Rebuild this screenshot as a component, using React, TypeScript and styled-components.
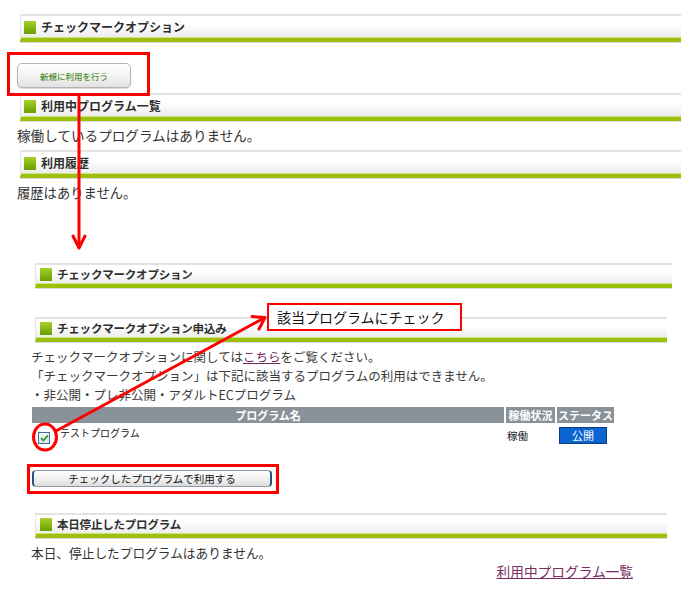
import React from "react";
import styled, { createGlobalStyle } from "styled-components";

const GlobalStyle = createGlobalStyle`
  html, body { margin: 0; padding: 0; background: #fff; }
  body { font-family: "Noto Sans CJK JP", "Noto Sans", sans-serif; color: #333; }
  * { box-sizing: border-box; }
`;

const Page = styled.div`
  position: relative;
  width: 692px;
  height: 591px;
  overflow: hidden;
  background: #fff;
`;

const TopShot = styled.section`
  display: flex;
  flex-direction: column;
  align-items: flex-start;
  padding: 14px 11px 0 17px;
`;

const BottomShot = styled.section`
  display: flex;
  flex-direction: column;
  align-items: flex-start;
  margin-top: 60px;
  padding-left: 31px;
`;

const Head = styled.div<{ $compact?: boolean; $width: number; $gap?: number }>`
  display: flex;
  align-items: center;
  gap: 5px;
  flex: none;
  margin-top: ${(p) => p.$gap ?? 0}px;
  margin-left: ${(p) => (p.$compact ? 4 : 3)}px;
  width: ${(p) => p.$width}px;
  height: ${(p) => (p.$compact ? 25 : 28)}px;
  padding-left: ${(p) => (p.$compact ? 4 : 3)}px;
  border-top: 2px solid #e3e3e3;
  border-left: 1px solid #e6e6e6;
  border-bottom: 4px solid #9bc10d;
  background: linear-gradient(#ffffff 0%, #ffffff 35%, #ececec 100%);
  box-shadow: 0 1px 0 #dcdcdc, inset 0 -1px 0 #cfe27a;
`;

const Mark = styled.span`
  flex: none;
  width: 12px;
  height: 13px;
  background: linear-gradient(#a8d12a, #6a9e00);
`;

const HeadTitle = styled.span<{ $compact?: boolean }>`
  font-size: ${(p) => (p.$compact ? 11.5 : 12)}px;
  font-weight: 700;
  color: #2e2e2e;
  line-height: 1;
  white-space: nowrap;
  letter-spacing: ${(p) => (p.$compact ? "-0.2px" : "0")};
`;

const Highlight = styled.div<{ $t: number; $r: number; $b: number; $l: number; $gap: number; $indent?: number }>`
  position: relative;
  margin-top: ${(p) => p.$gap}px;
  margin-left: ${(p) => p.$indent ?? 0}px;
  display: flex;
  &::after {
    content: "";
    position: absolute;
    top: -${(p) => p.$t}px;
    right: -${(p) => p.$r}px;
    bottom: -${(p) => p.$b}px;
    left: -${(p) => p.$l}px;
    border: 3px solid #ff0000;
    pointer-events: none;
  }
`;

const SoftButton = styled.button`
  width: 114px;
  height: 25px;
  padding: 0;
  border: 1px solid #b4b4b4;
  border-radius: 5px;
  background: linear-gradient(#ffffff, #f4f4f4 50%, #e2e2e2);
  box-shadow: 0 1px 1px rgba(0, 0, 0, 0.15);
  font-family: "Noto Sans CJK JP", sans-serif;
  font-size: 8.5px;
  color: #4d8b2c;
  font-weight: 500;
`;

const Note = styled.p<{ $gap: number; $size: number; $lh: number }>`
  margin: ${(p) => p.$gap}px 0 0;
  font-size: ${(p) => p.$size}px;
  line-height: ${(p) => p.$lh}px;
  color: #333;
  white-space: nowrap;
`;

const InfoLines = styled.div`
  margin-top: 5px;
  font-size: 12.5px;
  line-height: 19px;
  color: #3a3a3a;
  white-space: nowrap;
`;

const InlineLink = styled.a`
  color: #7a2c5e;
  text-decoration: underline;
`;

const Grid = styled.div`
  margin-top: 3px;
  margin-left: 1px;
  display: grid;
  grid-template-columns: 472px 49px 57px;
  column-gap: 2px;
`;

const HeadCell = styled.div`
  height: 16px;
  background: #8a9299;
  color: #fff;
  font-size: 11px;
  font-weight: 700;
  line-height: 16px;
  text-align: center;
  white-space: nowrap;
`;

const Cell = styled.div<{ $pad: number }>`
  height: 26px;
  display: flex;
  align-items: flex-start;
  padding-top: ${(p) => p.$pad}px;
`;

const NameCell = styled(Cell)`
  padding-left: 6px;
  gap: 10px;
`;

const Check = styled.span`
  flex: none;
  margin-top: 6px;
  width: 12px;
  height: 12px;
  border: 1px solid #3f6d97;
  background: linear-gradient(#f7f7f7, #e4e6e8);
  display: flex;
  align-items: center;
  justify-content: center;
`;

const SmallText = styled.span<{ $size: number }>`
  font-size: ${(p) => p.$size}px;
  line-height: 14px;
  color: #222;
  white-space: nowrap;
`;

const StateCell = styled(Cell)`
  padding-left: 1px;
`;

const Badge = styled.span`
  margin-left: 2px;
  width: 48px;
  height: 17px;
  background: #0b64cf;
  border: 1px solid #0a3f86;
  color: #fff;
  font-size: 11px;
  line-height: 15px;
  text-align: center;
`;

const WideButton = styled.button`
  width: 240px;
  height: 17px;
  padding: 0;
  border: 1px solid #8f9aa8;
  border-left: 2px solid #2a5580;
  border-right: 2px solid #2a5580;
  border-radius: 4px;
  background: linear-gradient(#ffffff, #f1f1f1 55%, #dcdcdc);
  font-family: "Noto Sans CJK JP", sans-serif;
  font-size: 10.5px;
  line-height: 13px;
  color: #111;
`;

const LinkRow = styled.div`
  align-self: stretch;
  display: flex;
  justify-content: flex-end;
  padding-right: 59px;
  font-size: 13.7px;
  line-height: 19px;
`;

const PlainLink = styled.a`
  color: #7a2c5e;
  text-decoration: underline;
`;

const Callout = styled.div`
  position: absolute;
  left: 267px;
  top: 303px;
  width: 195px;
  height: 28px;
  border: 2px solid #ff0000;
  background: #fff;
  padding-left: 8px;
  font-size: 14px;
  line-height: 24px;
  color: #111;
  white-space: nowrap;
`;

const Overlay = styled.svg`
  position: absolute;
  left: 0;
  top: 0;
  pointer-events: none;
`;

export default function App() {
  return (
    <>
      <GlobalStyle />
      <Page>
        <TopShot>
          <Head $width={661}>
            <Mark />
            <HeadTitle>チェックマークオプション</HeadTitle>
          </Head>
          <Highlight $gap={21} $t={11} $r={19} $b={8} $l={10}>
            <SoftButton>新規に利用を行う</SoftButton>
          </Highlight>
          <Head $width={661} $gap={5}>
            <Mark />
            <HeadTitle>利用中プログラム一覧</HeadTitle>
          </Head>
          <Note $gap={4} $size={13.6} $lh={20}>稼働しているプログラムはありません。</Note>
          <Head $width={661} $gap={5}>
            <Mark />
            <HeadTitle>利用履歴</HeadTitle>
          </Head>
          <Note $gap={5} $size={13.3} $lh={20}>履歴はありません。</Note>
        </TopShot>

        <BottomShot>
          <Head $compact $width={637}>
            <Mark />
            <HeadTitle $compact>チェックマークオプション</HeadTitle>
          </Head>
          <Head $compact $width={632} $gap={29}>
            <Mark />
            <HeadTitle $compact>チェックマークオプション申込み</HeadTitle>
          </Head>
          <InfoLines>
            <div>
              チェックマークオプションに関しては<InlineLink href="#">こちら</InlineLink>をご覧ください。
            </div>
            <div>「チェックマークオプション」は下記に該当するプログラムの利用はできません。</div>
            <div>・非公開・プレ非公開・アダルトECプログラム</div>
          </InfoLines>
          <Grid>
            <HeadCell>プログラム名</HeadCell>
            <HeadCell>稼働状況</HeadCell>
            <HeadCell>ステータス</HeadCell>
            <NameCell $pad={3}>
              <Check>
                <svg width="9" height="8" viewBox="0 0 9 8">
                  <path d="M1 4.2 L3.4 6.5 L8 1.3" fill="none" stroke="#25a12a" strokeWidth="1.8" />
                </svg>
              </Check>
              <SmallText $size={10}>テストプログラム</SmallText>
            </NameCell>
            <StateCell $pad={6}>
              <SmallText $size={10.5}>稼働</SmallText>
            </StateCell>
            <Cell $pad={4}>
              <Badge>公開</Badge>
            </Cell>
          </Grid>
          <Highlight $gap={21} $indent={1} $t={6} $r={7} $b={7} $l={5}>
            <WideButton>チェックしたプログラムで利用する</WideButton>
          </Highlight>
          <Head $compact $width={632} $gap={26}>
            <Mark />
            <HeadTitle $compact>本日停止したプログラム</HeadTitle>
          </Head>
          <Note $gap={5} $size={12.7} $lh={19}>本日、停止したプログラムはありません。</Note>
          <LinkRow>
            <PlainLink href="#">利用中プログラム一覧</PlainLink>
          </LinkRow>
        </BottomShot>

        <Overlay width="692" height="591" viewBox="0 0 692 591">
          <g stroke="#ff0000" strokeWidth="3" fill="none" strokeLinecap="round" strokeLinejoin="round">
            <line x1="79" y1="97" x2="79" y2="247" />
            <polyline points="73,236 79,248 85,236" />
            <ellipse cx="45" cy="437" rx="11.5" ry="13" />
            <line x1="56" y1="431" x2="264" y2="318" />
            <polyline points="252,316.5 265,317.5 259,329" />
          </g>
        </Overlay>
        <Callout>該当プログラムにチェック</Callout>
      </Page>
    </>
  );
}
